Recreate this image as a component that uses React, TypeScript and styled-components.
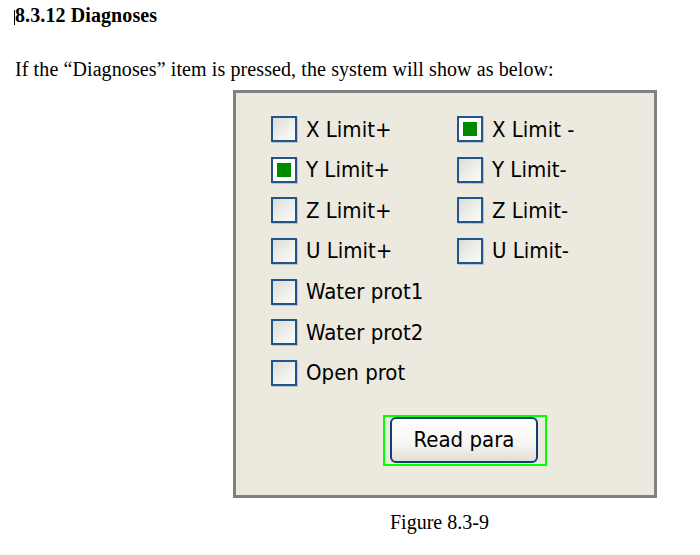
import React from 'react';
import styled, { createGlobalStyle } from 'styled-components';

const GlobalStyle = createGlobalStyle`
  html, body {
    margin: 0;
    padding: 0;
    background: #ffffff;
  }
`;

const Page = styled.div`
  padding: 0 0 0 15px;
  font-family: 'Liberation Serif', 'Times New Roman', serif;
  color: #000;
`;

const Heading = styled.h3`
  position: relative;
  margin: 3px 0 0;
  font-size: 20px;
  line-height: 24px;
  font-weight: 700;
  letter-spacing: 0.1px;
`;

const Caret = styled.span`
  position: absolute;
  left: -1px;
  top: 7px;
  width: 1px;
  height: 15px;
  background: #000;
`;

const Para = styled.p`
  margin: 30px 0 0;
  font-size: 20px;
  line-height: 24px;
  letter-spacing: 0.1px;
`;

const Panel = styled.div`
  box-sizing: border-box;
  margin: 9px 0 0 218px;
  width: 424px;
  height: 408px;
  border: 3px solid #818181;
  background: #ece9de;
  padding: 15.7px 0 0 35px;
  font-family: 'DejaVu Sans Condensed', 'DejaVu Sans', sans-serif;
  font-size: 22px;
`;

const CheckGrid = styled.div`
  display: grid;
  grid-template-columns: 186px auto;
  grid-auto-rows: 40.67px;
`;

const CheckRow = styled.label`
  display: flex;
  align-items: center;
  gap: 9px;
  color: #000;
  white-space: nowrap;
`;

const Box = styled.span<{ $checked?: boolean }>`
  box-sizing: border-box;
  flex: 0 0 26px;
  width: 26px;
  height: 26px;
  border: 2px solid #23558a;
  box-shadow: 1px 1px 0 rgba(120, 150, 190, 0.45);
  background: ${p => (p.$checked ? '#ffffff' : 'linear-gradient(135deg, #dcdcd5 0%, #efefeb 55%, #fafaf8 100%)')};
  display: flex;
  align-items: center;
  justify-content: center;
`;

const Tick = styled.span`
  width: 14px;
  height: 14px;
  background: #008a00;
`;

const Focus = styled.div`
  box-sizing: border-box;
  display: flex;
  margin: 21.7px 0 0 112px;
  width: 164px;
  height: 51px;
  border: 2px solid #00ff00;
  padding: 0 7px 1px 5px;
`;

const ReadButton = styled.button`
  flex: 1;
  box-sizing: border-box;
  border: 2px solid #0f3f73;
  border-radius: 6px;
  background: linear-gradient(#ffffff 0%, #f6f5f1 60%, #e3ded3 100%);
  font-family: 'DejaVu Sans Condensed', 'DejaVu Sans', sans-serif;
  font-size: 22px;
  color: #000;
  padding: 0;
`;

const Caption = styled.div`
  margin: 12px 0 0 375px;
  font-size: 20px;
  line-height: 24px;
`;

type Item = { label: string; checked?: boolean } | null;

const items: Item[] = [
  { label: 'X Limit+' },
  { label: 'X Limit -', checked: true },
  { label: 'Y Limit+', checked: true },
  { label: 'Y Limit-' },
  { label: 'Z Limit+' },
  { label: 'Z Limit-' },
  { label: 'U Limit+' },
  { label: 'U Limit-' },
  { label: 'Water prot1' },
  null,
  { label: 'Water prot2' },
  null,
  { label: 'Open prot' },
];

const App: React.FC = () => (
  <Page>
    <GlobalStyle />
    <Heading>
      <Caret />
      8.3.12 Diagnoses
    </Heading>
    <Para>If the “Diagnoses” item is pressed, the system will show as below:</Para>
    <Panel>
      <CheckGrid>
        {items.map((item, i) =>
          item ? (
            <CheckRow key={i}>
              <Box $checked={item.checked}>{item.checked && <Tick />}</Box>
              {item.label}
            </CheckRow>
          ) : (
            <span key={i} />
          )
        )}
      </CheckGrid>
      <Focus>
        <ReadButton>Read para</ReadButton>
      </Focus>
    </Panel>
    <Caption>Figure 8.3-9</Caption>
  </Page>
);

export default App;
